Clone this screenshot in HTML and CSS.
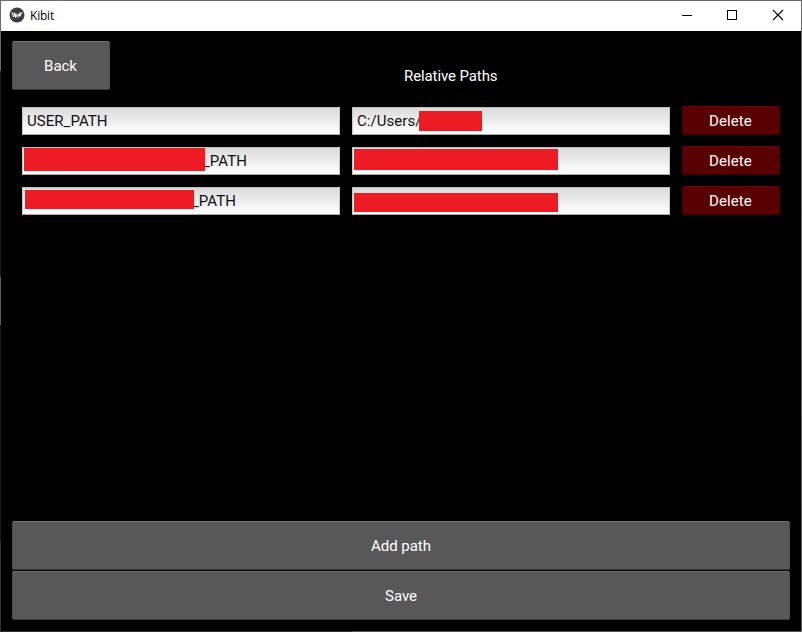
FILE: index.html
```html
<!DOCTYPE html>
<html lang="en">
<head>
<meta charset="utf-8">
<title>Kibit</title>
<link rel="stylesheet" href="styles.css">
</head>
<body>
<div class="window">
  <header class="titlebar">
    <svg class="logo" width="16" height="16" viewBox="0 0 16 16"><circle cx="8" cy="8" r="7.5" fill="#3c3d40"/><path d="M2.4 5.3H4L5.2 10H3.8Z" fill="#ddd"/><path d="M4.8 5L8.3 8.2L6.9 11L5.4 9.4Z" fill="#fff"/><path d="M7.6 5.8L9.4 7.6L10.9 5.6L14 5.4L12.4 6.9L11.8 9.2L9.6 9.6L7.9 11L8.8 8.6Z" fill="#eee"/></svg>
    <span class="title">Kibit</span>
    <div class="controls">
      <svg width="46" height="30" viewBox="0 0 46 30" shape-rendering="crispEdges"><path d="M18 14.5H28" stroke="#000"/></svg>
      <svg width="46" height="30" viewBox="0 0 46 30" shape-rendering="crispEdges"><rect x="17.5" y="9.5" width="9" height="9" fill="none" stroke="#000"/></svg>
      <svg width="46" height="30" viewBox="0 0 46 30"><path d="M17 9L27 19M27 9L17 19" stroke="#000" stroke-width="1.1"/></svg>
    </div>
  </header>
  <main class="content">
    <div class="top">
      <button class="btn back">Back</button>
      <h1 class="heading">Relative Paths</h1>
    </div>
    <div class="rows">
      <div class="row">
        <div class="field">USER_PATH</div>
        <div class="field">C:/Users/<i class="mask m1"></i></div>
        <button class="btn delete">Delete</button>
      </div>
      <div class="row">
        <div class="field"><i class="mask m2"></i><span class="s2">_PATH</span></div>
        <div class="field"><i class="mask m3"></i></div>
        <button class="btn delete">Delete</button>
      </div>
      <div class="row">
        <div class="field"><i class="mask m4"></i><span class="s3">_PATH</span></div>
        <div class="field"><i class="mask m5"></i></div>
        <button class="btn delete">Delete</button>
      </div>
    </div>
    <footer class="actions">
      <button class="btn">Add path</button>
      <button class="btn">Save</button>
    </footer>
  </main>
</div>
</body>
</html>
```
FILE: styles.css
```css
* { box-sizing: border-box; }
body {
  margin: 0;
  background: #000;
  font: 15px/18px Roboto, sans-serif;
}
.window {
  width: 802px;
  height: 632px;
  padding: 1px;
  display: flex;
  flex-direction: column;
  background:
    linear-gradient(#6b6b6b, #6b6b6b) top / 100% 1px no-repeat,
    linear-gradient(90deg, #303030 352px, #555 352px) bottom / 100% 1px no-repeat,
    linear-gradient(#6b6b6b 71px, #191919 71px 277px, #5c5c5c 277px 325px, #191919 325px 541px, #333 541px) left / 1px 100% no-repeat,
    linear-gradient(#6b6b6b, #5c5c5c) right / 1px 100% no-repeat;
}
.titlebar {
  height: 30px;
  flex: none;
  display: flex;
  align-items: center;
  padding-left: 8px;
  background: #fff;
}
.logo { margin-bottom: 2px; }
.title {
  margin: 0 0 1px 5px;
  font: 12px/16px "Open Sans", sans-serif;
  letter-spacing: -0.2px;
  color: #000;
}
.controls { margin: 0 -1px 0 auto; display: flex; }
.content {
  flex: 1;
  display: flex;
  flex-direction: column;
  padding: 10px 11px 11px;
  background: #000;
}
.top { display: flex; height: 65px; }
.btn {
  height: 49px;
  padding: 0 1px 0 0;
  border: 1px solid;
  border-color: #747474 #4c4c4c #3a3a3a;
  border-radius: 2px;
  background: #585858;
  color: #fff;
  font: inherit;
  letter-spacing: -0.05px;
}
.back { width: 98px; }
.heading {
  margin: 26px 0 0 294px;
  font-size: 15px;
  font-weight: 400;
  color: #fff;
  letter-spacing: -0.1px;
}
.rows { display: flex; flex-direction: column; gap: 11px; padding: 0 10px; }
.row {
  display: grid;
  grid-template-columns: 318px 318px 98px;
  gap: 12px;
  width: 758px;
  height: 29px;
  align-items: end;
}
.field {
  position: relative;
  height: 28px;
  padding: 4px 4px 0;
  border: 1px solid;
  border-color: #c0c0c0 #c8c8c8 #a8a8a8;
  background: linear-gradient(#dadada, #fff);
  color: #111;
  letter-spacing: 0.05px;
  white-space: nowrap;
}
.mask { position: absolute; background: #ed1c24; }
.m1 { left: 66px; top: 3px; width: 63px; height: 20px; }
.m2 { left: 1px; top: 0; width: 181px; height: 23px; }
.m3 { left: 1px; top: 1px; width: 204px; height: 21px; }
.m4 { left: 2px; top: 2px; width: 169px; height: 19px; }
.m5 { left: 1px; top: 5px; width: 204px; height: 19px; }
.s2 { margin-left: 176px; }
.s3 { margin-left: 165px; }
.delete {
  height: 29px;
  border-color: #720000 #500000 #400000;
  background: #580000;
  letter-spacing: 0.1px;
}
.actions { margin-top: auto; display: flex; flex-direction: column; gap: 1px; }
.actions .btn { padding-right: 0; }
```
